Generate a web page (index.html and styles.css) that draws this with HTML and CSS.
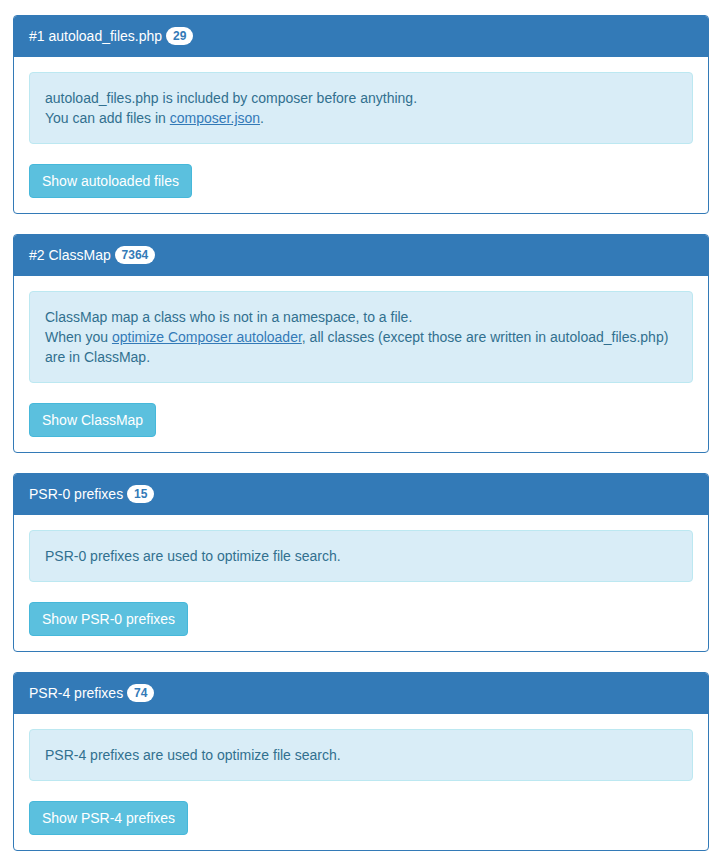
FILE: index.html
```html
<!DOCTYPE html>
<html>
<head>
<meta charset="utf-8">
<link rel="stylesheet" href="styles.css">
</head>
<body>
<div class="container">
  <div class="panel">
    <div class="panel-heading">#1 autoload_files.php <span class="badge">29</span></div>
    <div class="panel-body">
      <div class="alert">autoload_files.php is included by composer before anything.<br>You can add files in <a href="#">composer.json</a>.</div>
      <button class="btn">Show autoloaded files</button>
    </div>
  </div>
  <div class="panel">
    <div class="panel-heading">#2 ClassMap <span class="badge">7364</span></div>
    <div class="panel-body">
      <div class="alert">ClassMap map a class who is not in a namespace, to a file.<br>When you <a href="#">optimize Composer autoloader</a>, all classes (except those are written in autoload_files.php) are in ClassMap.</div>
      <button class="btn">Show ClassMap</button>
    </div>
  </div>
  <div class="panel">
    <div class="panel-heading">PSR-0 prefixes <span class="badge">15</span></div>
    <div class="panel-body">
      <div class="alert">PSR-0 prefixes are used to optimize file search.</div>
      <button class="btn">Show PSR-0 prefixes</button>
    </div>
  </div>
  <div class="panel">
    <div class="panel-heading">PSR-4 prefixes <span class="badge">74</span></div>
    <div class="panel-body">
      <div class="alert">PSR-4 prefixes are used to optimize file search.</div>
      <button class="btn">Show PSR-4 prefixes</button>
    </div>
  </div>
</div>
</body>
</html>
```
FILE: styles.css
```css
* { box-sizing: border-box; }
html, body { margin: 0; padding: 0; background: #fff; }
body {
  font-family: "Liberation Sans", Arial, sans-serif;
  font-size: 14px;
  line-height: 20px;
  color: #333;
}
.container {
  padding: 15px 13px 0 13px;
  display: flex;
  flex-direction: column;
  gap: 20px;
}
.panel {
  border: 1px solid #337ab7;
  border-radius: 4px;
  background: #fff;
}
.panel-heading {
  height: 41px;
  background: #337ab7;
  color: #fff;
  padding: 10px 15px;
  border-bottom: 1px solid #337ab7;
  border-radius: 3px 3px 0 0;
  overflow: hidden;
}
.badge {
  display: inline-block;
  min-width: 10px;
  padding: 3px 7px;
  font-size: 12px;
  font-weight: bold;
  line-height: 12px;
  color: #337ab7;
  background: #fff;
  border-radius: 10px;
  text-align: center;
  vertical-align: 1px;
  white-space: nowrap;
}
.panel-body {
  padding: 15px;
  display: flex;
  flex-direction: column;
  align-items: flex-start;
  gap: 20px;
}
.alert {
  align-self: stretch;
  padding: 15px;
  background: #d9edf7;
  border: 1px solid #bce8f1;
  border-radius: 4px;
  color: #31708f;
}
.alert a {
  color: #337ab7;
  text-decoration: underline;
}
.btn {
  font-family: "Liberation Sans", Arial, sans-serif;
  font-size: 14px;
  line-height: 20px;
  height: 34px;
  padding: 6px 12px;
  color: #fff;
  background: #5bc0de;
  border: 1px solid #46b8da;
  border-radius: 4px;
  cursor: pointer;
}
```
